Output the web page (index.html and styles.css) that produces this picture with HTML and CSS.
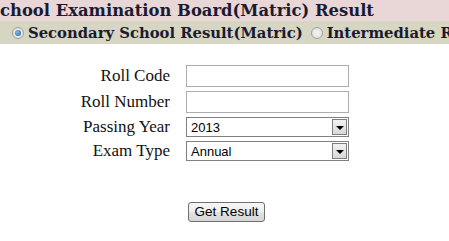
FILE: index.html
```html
<!DOCTYPE html>
<html>
<head>
<meta charset="utf-8">
<link rel="stylesheet" href="styles.css">
</head>
<body>
<div class="title">chool Examination Board(Matric) Result</div>
<div class="choice">
  <label class="opt"><span class="radio checked"></span>Secondary School Result(Matric)</label>
  <label class="opt"><span class="radio"></span>Intermediate Result</label>
</div>
<form class="form">
  <div class="row"><span class="lbl">Roll Code</span><span class="input"></span></div>
  <div class="row"><span class="lbl">Roll Number</span><span class="input"></span></div>
  <div class="row sel-row"><span class="lbl">Passing Year</span><span class="select"><span class="val">2013</span><span class="arrow"></span></span></div>
  <div class="row sel-row"><span class="lbl">Exam Type</span><span class="select"><span class="val">Annual</span><span class="arrow"></span></span></div>
  <div class="btn-row"><span class="btn">Get Result</span></div>
</form>
</body>
</html>
```
FILE: styles.css
```css
html, body { margin: 0; padding: 0; background: #fff; overflow: hidden; }
body { width: 449px; height: 241px; font-family: "Liberation Serif", serif; color: #1a1a30; }
.title {
  background: #e9d6d6;
  height: 21px;
  white-space: nowrap;
  overflow: hidden;
  font-family: "DejaVu Serif", serif;
  font-weight: bold;
  font-size: 16.4px;
  line-height: 21px;
}
.choice {
  background: #d6d6c2;
  height: 23px;
  white-space: nowrap;
  overflow: hidden;
  font-family: "DejaVu Serif", serif;
  font-weight: bold;
  font-size: 14.8px;
  line-height: 23px;
  padding-left: 12px;
  display: flex;
  gap: 8px;
}
.opt { display: flex; align-items: center; flex-shrink: 0; }
.radio {
  width: 12px; height: 12px; border-radius: 50%;
  border: 1px solid #a0a0a0;
  background: radial-gradient(circle, #f4f4f4 0, #dcdcdc 100%);
  margin-right: 4px;
  box-sizing: border-box;
  position: relative;
}
.radio.checked::after {
  content: ""; position: absolute; left: 2px; top: 2px; width: 6px; height: 6px; border-radius: 50%;
  background: radial-gradient(circle at 40% 40%, #7fc0ee, #1e5a9a);
}
.form { padding-top: 19px; }
.row { display: flex; align-items: center; height: 26px; }
.sel-row { height: 24px; }
.lbl { width: 186px; text-align: right; font-size: 17px; padding-right: 16px; box-sizing: border-box; color: #111; }
.input { display: block; width: 163px; height: 22px; border: 1px solid #abadb3; box-sizing: border-box; background: #fff; }
.select {
  display: flex; align-items: center; justify-content: space-between;
  width: 163px; height: 20px; border: 1px solid #808080; box-sizing: border-box;
  font-family: "Liberation Sans", Arial, sans-serif; font-size: 13px; color: #000;
  padding: 0 1px 0 4px;
}
.arrow {
  width: 15px; height: 16px; box-sizing: border-box;
  border: 1px solid #7e7e7e; background: linear-gradient(#f2f2f2, #d8d8d8);
  position: relative;
}
.arrow::after {
  content: ""; position: absolute; left: 3px; top: 6px;
  border-left: 4px solid transparent; border-right: 4px solid transparent; border-top: 4px solid #000;
}
.btn-row { padding-top: 39px; padding-left: 188px; }
.btn {
  display: inline-block; width: 77px; height: 20px; box-sizing: border-box;
  border: 1px solid #707070; border-radius: 3px;
  background: linear-gradient(#f6f6f6 0%, #eeeeee 50%, #e2e2e2 51%, #d6d6d6 100%);
  font-family: "Liberation Sans", Arial, sans-serif; font-size: 13.5px; color: #000;
  text-align: center; line-height: 18px;
}
```
